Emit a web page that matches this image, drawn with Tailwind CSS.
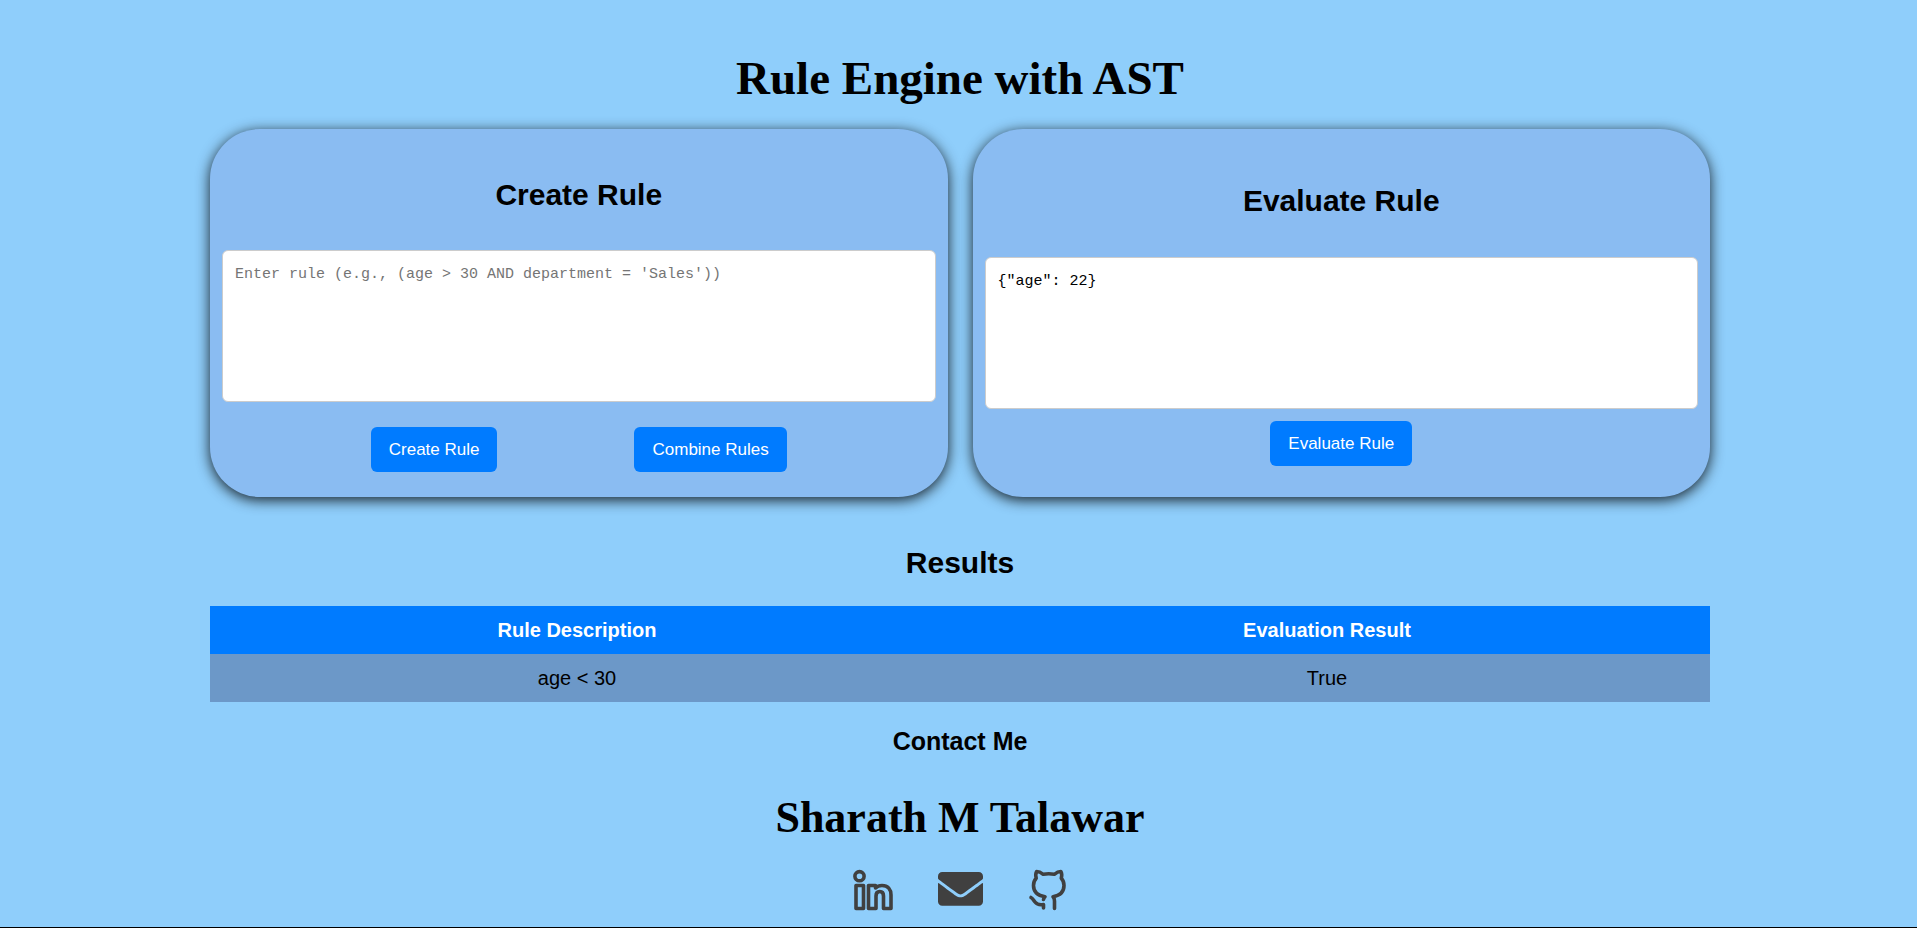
<!DOCTYPE html>
<html lang="en">
<head>
<meta charset="utf-8">
<meta name="viewport" content="width=device-width, initial-scale=1">
<title>Rule Engine with AST</title>
<script src="https://cdn.jsdelivr.net/npm/@tailwindcss/browser@4"></script>
</head>
<body class="flex min-h-screen flex-col border-b border-black bg-[#8fcefb] pl-[3px] font-['Liberation_Sans',Arial,sans-serif] text-black">
<main class="mx-auto w-full max-w-[1500px] pt-[50px] text-center">
  <h1 class="font-['Liberation_Serif',serif] text-[47px] leading-[56px] font-bold">Rule Engine with AST</h1>

  <div class="mt-[23px] grid grid-cols-2 gap-[25px]">
    <section class="flex flex-col rounded-[50px] bg-[#8abcf2] px-3 pt-[48px] pb-[25px] shadow-[0_3px_14px_rgba(0,0,0,0.85)]">
      <h2 class="text-[30px] leading-9 font-bold"><label for="rule">Create Rule</label></h2>
      <textarea id="rule" class="mt-[37px] h-[152px] w-full resize-none rounded-md border border-[#cccccc] bg-white p-3 font-['Liberation_Mono',monospace] text-[15px] leading-6 placeholder:text-[#757575]" placeholder="Enter rule (e.g., (age &gt; 30 AND department = 'Sales'))"></textarea>
      <div class="mt-[25px] flex justify-center gap-[137px]">
        <button type="button" class="h-[45px] rounded-md bg-[#007bff] px-[18px] text-[17px] text-white">Create Rule</button>
        <button type="button" class="h-[45px] rounded-md bg-[#007bff] px-[18px] text-[17px] text-white">Combine Rules</button>
      </div>
    </section>

    <section class="flex flex-col items-center rounded-[50px] bg-[#8abcf2] px-3 pt-[54px] shadow-[0_3px_14px_rgba(0,0,0,0.85)]">
      <h2 class="text-[30px] leading-9 font-bold"><label for="data">Evaluate Rule</label></h2>
      <textarea id="data" class="mt-[38px] h-[152px] w-full resize-none rounded-md border border-[#cccccc] bg-white p-3 font-['Liberation_Mono',monospace] text-[15px] leading-6">{"age": 22}</textarea>
      <button type="button" class="mt-3 h-[45px] rounded-md bg-[#007bff] px-[18px] text-[17px] text-white">Evaluate Rule</button>
    </section>
  </div>

  <h2 class="mt-12 text-[30px] leading-9 font-bold">Results</h2>
  <table class="mt-[25px] w-full table-fixed border-collapse text-xl">
    <thead>
      <tr class="h-12 bg-[#007bff] text-white"><th scope="col" class="pr-4">Rule Description</th><th scope="col" class="pr-4">Evaluation Result</th></tr>
    </thead>
    <tbody>
      <tr class="h-12 bg-[#6c98c8]"><td class="pr-4">age &lt; 30</td><td class="pr-4">True</td></tr>
    </tbody>
  </table>
</main>

<footer class="mt-6 text-center">
  <h3 class="text-[25px] leading-[30px] font-bold">Contact Me</h3>
  <p class="mt-9 font-['Liberation_Serif',serif] text-[44px] leading-[52px] font-bold">Sharath M Talawar</p>
  <nav class="mt-[21px] flex justify-center gap-10 text-[#404040]" aria-label="Contact links">
    <a href="#linkedin" aria-label="LinkedIn" class="flex h-12 w-12 items-center justify-center">
      <svg class="size-12" viewBox="0 0 48 48" fill="none" stroke="currentColor" stroke-width="3.600" stroke-linejoin="round">
        <circle cx="11.500" cy="11.200" r="4.600"/>
        <path d="M8 20.500h7.500v23h-7.500zM20.500 20.500h7v2.500c2-2 4-2.500 6.500-2.500 6 0 9 4 9 9.500v13.500h-7.500V31c0-3-1.500-4.500-3.700-4.500S28 28 28 31v12.500h-7.500z"/>
      </svg>
    </a>
    <a href="#email" aria-label="Email" class="flex h-12 w-12 items-center justify-center">
      <svg class="w-[45px]" viewBox="0 64 512 384" fill="currentColor">
        <path d="M502.300 190.800c3.900-3.100 9.700-.2 9.700 4.700V400c0 26.500-21.500 48-48 48H48c-26.500 0-48-21.500-48-48V195.600c0-5 5.700-7.800 9.700-4.700 22.400 17.400 52.100 39.500 154.100 113.600 21.100 15.400 56.700 47.800 92.200 47.600 35.700.3 72-32.800 92.300-47.600 102-74.100 131.600-96.300 154-113.700zM256 320c23.200.4 56.600-29.200 73.400-41.400 132.700-96.300 142.800-104.700 173.400-128.700 5.800-4.500 9.200-11.500 9.200-18.900v-19c0-26.500-21.500-48-48-48H48c-26.500 0-48 21.500-48 48v19c0 7.400 3.400 14.300 9.200 18.900 30.600 23.900 40.700 32.400 173.400 128.700 16.800 12.200 50.200 41.800 73.400 41.400z"/>
      </svg>
    </a>
    <a href="#github" aria-label="GitHub" class="flex h-12 w-12 items-center justify-center">
      <svg class="size-12" viewBox="0 0 48 48" fill="none" stroke="currentColor" stroke-width="3.600" stroke-linecap="round" stroke-linejoin="round">
        <path d="M19.500 34.500c.2-1 .7-2 1.500-2.800C13 30.500 9.500 27 9.500 20.500c0-3.500 1-5.500 2.700-7.300-.7-2.500-.5-5 .5-6.700 2.300 0 4.500 1.200 6.500 2.800 3.800-.8 7.300-.8 11.100 0 2-1.600 4.200-2.800 6.500-2.800 1 1.700 1.200 4.200.5 6.700 1.700 1.800 2.700 3.800 2.700 7.300 0 6.500-4 10-11 11.200 1.300 1.300 1.500 2.300 1.500 4.300v7.500M19.500 43v-3.500c-5 1-7.200-.8-8.500-2.500s-2-3.500-4-4.500"/>
      </svg>
    </a>
  </nav>
</footer>
</body>
</html>
